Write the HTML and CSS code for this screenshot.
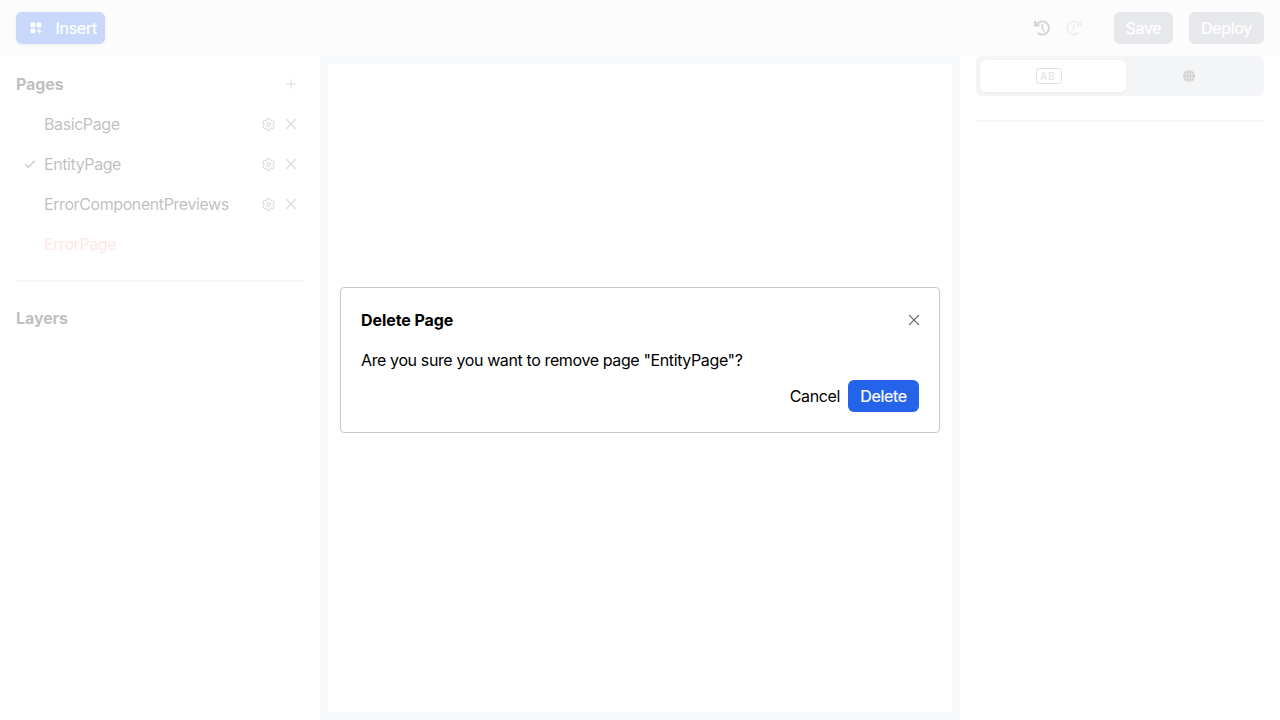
FILE: index.html
```html
<!DOCTYPE html>
<html lang="en">
<head>
<meta charset="utf-8">
<title>Page editor</title>
<link rel="stylesheet" href="styles.css">
</head>
<body>
<svg class="defs" width="0" height="0">
  <symbol id="x" viewBox="0 0 12 12"><path d="M1.4 1.4l9.2 9.2M10.6 1.4l-9.2 9.2" fill="none" stroke="currentColor" stroke-width="1.2" stroke-linecap="round"/></symbol>
  <symbol id="gear" viewBox="2 2 20 20"><g fill="none" stroke="currentColor" stroke-width="1.5" stroke-linejoin="round"><path d="M9.6 3.9c.1-.6.6-.9 1.1-.9h2.6c.6 0 1 .4 1.1.9l.2 1.3c.1.4.3.7.6.9l.3.1c.3.2.7.2 1.1.1l1.2-.5c.5-.2 1.1 0 1.4.5l1.3 2.2c.3.5.2 1.1-.3 1.4l-1 .9c-.3.2-.4.6-.4 1v.4c0 .4.1.7.4 1l1 .8c.5.4.6 1 .3 1.4l-1.3 2.3c-.3.5-.9.7-1.4.5l-1.2-.5c-.4-.1-.8-.1-1.1.1l-.3.2c-.3.2-.5.5-.6.8l-.2 1.3c-.1.6-.5.9-1.1.9h-2.6c-.5 0-1-.4-1.1-.9l-.2-1.3c-.1-.3-.3-.7-.6-.8l-.3-.2c-.3-.2-.7-.2-1.1-.1l-1.2.5c-.5.2-1.1 0-1.4-.5l-1.3-2.3c-.3-.4-.2-1 .3-1.4l1-.8c.3-.3.4-.6.4-1v-.4c0-.4-.1-.8-.4-1l-1-.9c-.5-.3-.6-.9-.3-1.4l1.3-2.2c.3-.5.9-.7 1.4-.5l1.2.5c.4.1.8.1 1.1-.1l.3-.1c.3-.2.5-.5.6-.9z"/><circle cx="12" cy="12" r="2.8"/></g></symbol>
  <symbol id="history" viewBox="0 0 18 18"><g fill="none" stroke="currentColor" stroke-width="1.9"><path d="M3.4 6.1A6.6 6.6 0 1 1 4.7 13.7"/><path d="M9.2 5v4.3l2 3" stroke-width="1.5"/></g><path d="M1 2v5.5h5.6V5.6H3.2V2z" fill="currentColor"/></symbol>
</svg>
<div class="app">
  <header class="topbar">
    <button class="btn insert"><svg class="ico12" viewBox="0 0 12 12" fill="currentColor"><rect x=".5" y=".5" width="4.7" height="4.7" rx=".9"/><rect x="6.6" y=".5" width="4.7" height="4.7" rx=".9"/><rect x=".5" y="6.6" width="4.7" height="4.7" rx=".9"/><path d="M8.6 6.3h.9v2.3h2.2v.9H9.5v2.2h-.9V9.5H6.3v-.9h2.3z"/></svg><span>Insert</span></button>
    <div class="tools">
      <svg class="ico18"><use href="#history"/></svg>
      <svg class="ico18 redo"><use href="#history"/></svg>
      <button class="btn muted save">Save</button>
      <button class="btn muted deploy">Deploy</button>
    </div>
  </header>
  <div class="body">
    <aside class="left">
      <div class="head"><h2>Pages</h2><svg class="plus" viewBox="0 0 12 12"><path d="M6 1.2v9.6M1.2 6h9.6" stroke="currentColor" stroke-width="1" fill="none"/></svg></div>
      <ul>
        <li><span class="mark"></span><span class="name">BasicPage</span><svg class="gear"><use href="#gear"/></svg><svg class="x"><use href="#x"/></svg></li>
        <li><span class="mark"><svg class="ico12 check" viewBox="0 0 12 12"><path d="M1.2 6.3l3.1 3.1 6.5-6.6" fill="none" stroke="currentColor" stroke-width="1.5"/></svg></span><span class="name">EntityPage</span><svg class="gear"><use href="#gear"/></svg><svg class="x"><use href="#x"/></svg></li>
        <li><span class="mark"></span><span class="name">ErrorComponentPreviews</span><svg class="gear"><use href="#gear"/></svg><svg class="x"><use href="#x"/></svg></li>
        <li class="error"><span class="mark"></span><span class="name">ErrorPage</span></li>
      </ul>
      <div class="rule"></div>
      <div class="head layers"><h2>Layers</h2></div>
    </aside>
    <main class="stage"><div class="page"></div></main>
    <aside class="right">
      <div class="tabs">
        <div class="tab active"><span class="ab">AB</span></div>
        <div class="tab"><svg class="globe" viewBox="0 0 12 12"><circle cx="6" cy="6" r="6" fill="currentColor"/><g fill="none" stroke="#d1d5db" stroke-width=".6"><path d="M0 4h12M0 8h12M6 0v12"/><ellipse cx="6" cy="6" rx="2.9" ry="6"/></g></svg></div>
      </div>
      <div class="rule"></div>
    </aside>
  </div>
</div>
<div class="overlay">
  <section class="dialog" role="dialog">
    <div class="dhead"><h2>Delete Page</h2><svg class="x"><use href="#x"/></svg></div>
    <p>Are you sure you want to remove page "EntityPage"?</p>
    <div class="actions"><span class="cancel">Cancel</span><button class="btn delete">Delete</button></div>
  </section>
</div>
</body>
</html>
```
FILE: styles.css
```css
* { box-sizing: border-box; }
body { margin: 0; font: 16px/24px Inter, "Liberation Sans", sans-serif; letter-spacing: -0.38px; color: #000; }
h2, p, ul { margin: 0; padding: 0; font-size: 16px; }
h2 { font-weight: 700; letter-spacing: -0.08px; }
svg { display: block; flex: none; }
.defs { position: absolute; }
.app { width: 1280px; height: 720px; display: flex; flex-direction: column; overflow: hidden; background: #fff; }
.btn { height: 32px; border: 0; border-radius: 6px; padding: 0; font: inherit; letter-spacing: -0.3px; color: #fff; display: flex; align-items: center; justify-content: center; -webkit-text-stroke: .2px #fff; }
.topbar { height: 56px; padding: 0 16px; background: #f3f3f3; display: flex; align-items: center; justify-content: space-between; }
.insert { width: 89.4px; padding-left: 5px; gap: 14px; background: #2563eb; box-shadow: 0 1px 4px rgba(0,0,0,.2); }
.ico12 { width: 12px; height: 12px; }
.check { color: #374151; }
.tools { display: flex; align-items: center; color: #4b5563; }
.ico18 { width: 18px; height: 18px; margin-right: 14px; }
.redo { transform: scaleX(-1); color: #b6bcc6; margin-right: 31px; }
.muted { background: #9ca3af; }
.save { width: 59px; margin-right: 16px; }
.deploy { width: 75px; }
.body { flex: 1; display: flex; }
.left { width: 320px; padding: 8px 16px; }
.head { height: 40px; display: flex; align-items: center; justify-content: space-between; }
.plus { width: 12px; height: 12px; margin-right: 7px; color: #6b7280; }
ul { list-style: none; }
li { height: 40px; display: flex; align-items: center; padding: 0 7px 0 8px; }
.mark { width: 20px; }
.name { flex: 1; letter-spacing: -0.41px; }
.gear { width: 13px; height: 13px; margin-right: 10.5px; color: #374151; }
.x { width: 12px; height: 12px; color: #5b6470; }
.error { color: #fb9a9a; }
.rule { height: 2px; background: #d1d5db; }
.left .rule { margin-top: 16px; }
.layers { margin-top: 16px; }
.stage { width: 640px; padding: 8px; background: #e2e8f0; display: flex; }
.page { flex: 1; background: #fff; }
.right { width: 320px; padding: 0 16px; }
.tabs { height: 40px; padding: 4px; border-radius: 6px; background: #d1d5db; display: flex; }
.right .rule { margin-top: 24px; }
.tab { width: 146px; display: flex; align-items: center; justify-content: center; border-radius: 6px; }
.active { background: #fff; box-shadow: 0 1px 3px rgba(0,0,0,.15); padding-right: 8px; }
.tab:last-child { width: 134px; padding-right: 8px; }
.ab { width: 26px; height: 16px; border: 1px solid #848e9c; border-radius: 2.5px; font-size: 10.5px; line-height: 15px; padding-left: 3px; font-weight: 500; letter-spacing: .3px; color: #8f99a6; }
.globe { width: 12px; height: 12px; color: #444; }
.overlay { position: fixed; inset: 0; background: rgba(255,255,255,.75); display: flex; align-items: center; justify-content: center; }
.dialog { width: 600px; height: 146px; border: 1px solid #c8c8c8; border-radius: 4px; background: #fff; padding: 20px; }
.dhead { display: flex; align-items: center; justify-content: space-between; height: 24px; margin-bottom: 16px; }
.dialog .x { margin-right: -1px; }
.actions { display: flex; justify-content: flex-end; align-items: center; gap: 8px; margin-top: 8px; }
.delete { width: 71px; background: #2563eb; }
```
